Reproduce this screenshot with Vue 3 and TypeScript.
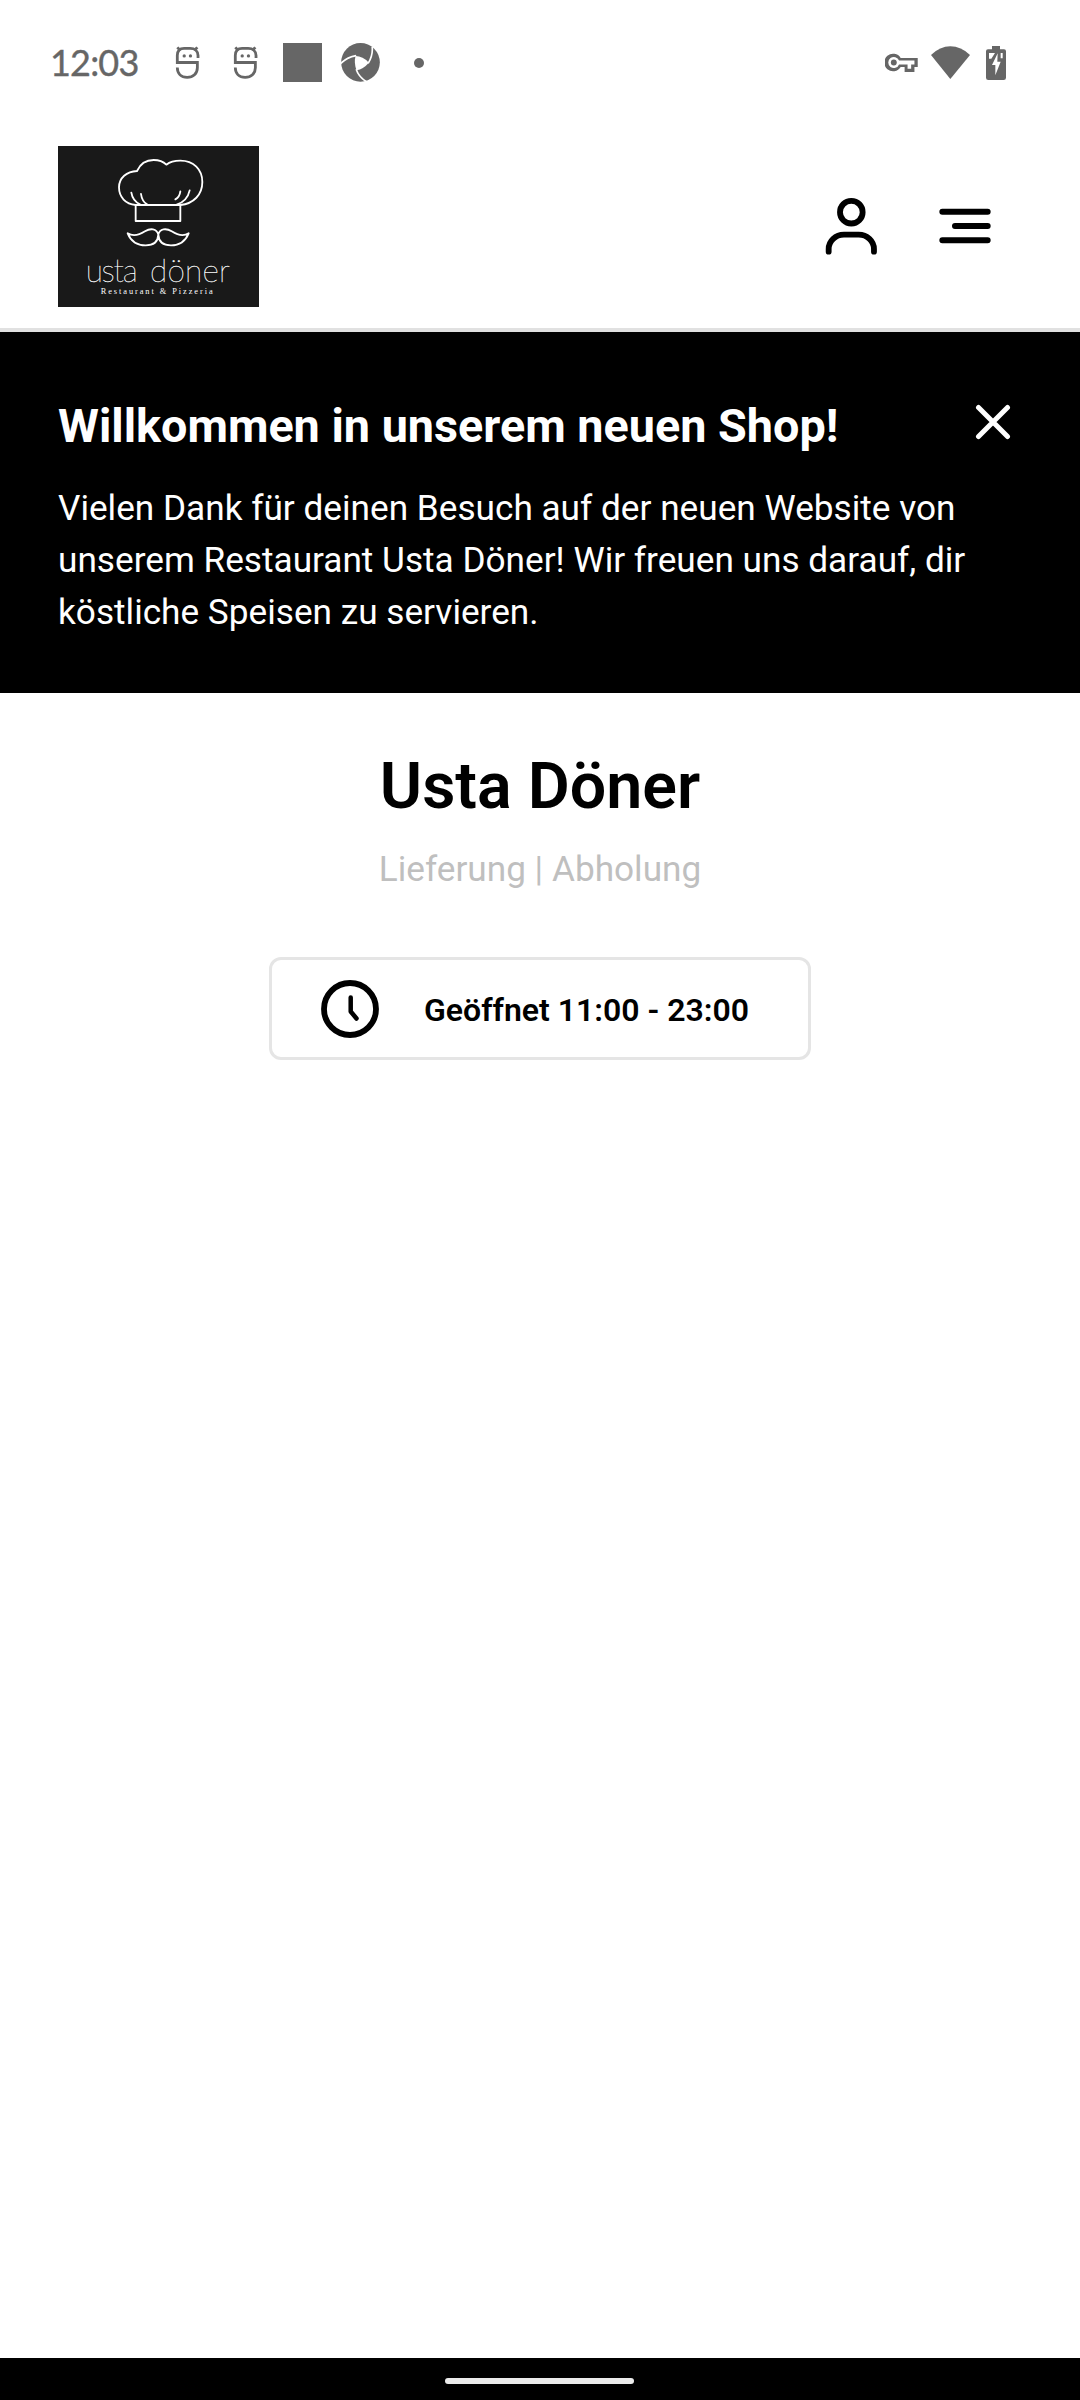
<script setup lang="ts">
import { ref } from 'vue'

const bannerOpen = ref(true)
const shop = {
  name: 'Usta Döner',
  services: 'Lieferung | Abholung',
  hours: 'Geöffnet 11:00 - 23:00',
}
const mascots = [1, 2]
</script>

<template>
  <div class="screen">
    <div class="status">
      <span class="time">12:03</span>
      <svg v-for="m in mascots" :key="m" class="mascot" viewBox="434 76 76 106">
        <g fill="none" stroke="#666" stroke-width="8.500">
          <path d="M504 115V108C504 94 494 86 480 86H462C448 86 441 94 441 108V129H502V145C502 163 489 174 471 174C453 174 441 163 441 144" />
          <path d="M441 83L450 92M502 83L493 92" />
        </g>
        <circle cx="462" cy="109" r="5" fill="#666" /><circle cx="481" cy="109" r="5" fill="#666" />
      </svg>
      <span class="square"></span>
      <svg class="swirl" viewBox="305 69 116 117">
        <circle cx="363" cy="127" r="58" fill="#666" />
        <path d="M348 108Q370 108 388 128Q372 147 351 151Q343 129 348 108Z" fill="#fff" />
        <path d="M303 131Q322 112 350 107M398 80Q401 106 386 130M421 172Q408 184 396 178M350 148Q358 172 382 186" fill="none" stroke="#fff" stroke-width="5" />
      </svg>
      <span class="dot"></span>
      <div class="system">
        <svg class="key" viewBox="75 99 99 58">
          <path d="M122 114A27 27 0 1 0 122 142H134V157H164V142H174V114Z" fill="#666" />
          <path d="M117 122A17 17 0 1 0 117 134H143V147H154V134H164V122Z" fill="#fff" />
          <circle cx="101" cy="128" r="9" fill="#666" />
        </svg>
        <svg class="wifi" viewBox="213 74 117 99"><path d="M213 101Q240 75 271 75Q303 75 330 101L271 173Z" fill="#666" /></svg>
        <svg class="battery" viewBox="378 75 60 102">
          <path d="M396 75H420V85H432Q438 85 438 91V170Q438 177 431 177H385Q378 177 378 170V91Q378 85 384 85H396Z" fill="#666" />
          <path d="M387 96H405L394 113H387ZM422 96H428V112H422ZM413 97L396 132H406V163L422 122H412Z" fill="#fff" />
        </svg>
      </div>
    </div>

    <header class="header">
      <svg class="logo" viewBox="54 48 603 483">
        <rect x="54" y="48" width="603" height="483" fill="#191919" />
        <g fill="none" stroke="#fff" stroke-width="5.500" stroke-linecap="round" stroke-linejoin="round">
          <path d="M287 225H421V273H287Z" />
          <path d="M287 225C257 222 237 202 237 172C237 144 260 124 291 123C302 99 319 90 341 90C357 90 370 95 379 104C389 96 404 92 421 92C461 92 487 119 487 156C487 194 461 221 421 225" />
          <path d="M274 188Q278 213 301 224M303 192Q306 215 322 224M421 184Q419 201 406 208M449 181Q442 213 410 224" />
          <path d="M355 314C350 295 331 294 315 304C298 315 281 321 263 310C274 337 294 346 317 346C340 346 354 335 355 314C359 295 379 294 395 304C412 315 429 321 446 310C435 337 415 346 393 346C370 346 356 335 355 314Z" />
        </g>
        <text class="wordmark" x="137" y="455" textLength="156">usta</text>
        <text class="wordmark" x="330" y="455" textLength="240">döner</text>
        <text class="tagline" x="182" y="492" textLength="336">Restaurant &amp; Pizzeria</text>
      </svg>
      <nav class="actions">
        <svg class="person" viewBox="134 80 160 176" fill="none" stroke="#000" stroke-width="17.500" stroke-linecap="round">
          <circle cx="213" cy="125.500" r="34" />
          <path d="M145 244V236A46 43 0 0 1 191 193H235A46 43 0 0 1 281 236V244" />
        </svg>
        <svg class="menu" viewBox="477 114 156 108" fill="none" stroke="#000" stroke-width="18" stroke-linecap="round">
          <path d="M487 125.500H623M525 168H623M487 210.500H623" />
        </svg>
      </nav>
    </header>

    <section v-if="bannerOpen" class="banner">
      <div class="banner-text">
        <h2>Willkommen in unserem neuen Shop!</h2>
        <p>Vielen Dank für deinen Besuch auf der neuen Website von<br />unserem Restaurant Usta Döner! Wir freuen uns darauf, dir<br />köstliche Speisen zu servieren.</p>
      </div>
      <svg class="close" viewBox="0 0 36 36" @click="bannerOpen = false">
        <path d="M3.500 3.500L32.500 32.500M32.500 3.500L3.500 32.500" fill="none" stroke="#fff" stroke-width="5" stroke-linecap="round" />
      </svg>
    </section>

    <main class="shop">
      <h1>{{ shop.name }}</h1>
      <p class="services">{{ shop.services }}</p>
      <div class="hours">
        <svg class="clock" viewBox="0 0 58 58" fill="none" stroke="#000" stroke-linecap="round" stroke-linejoin="round">
          <circle cx="29" cy="29" r="26" stroke-width="5.800" />
          <path d="M29.700 17.500V31.500L35.500 38.500" stroke-width="4.500" />
        </svg>
        <span class="hours-text">{{ shop.hours }}</span>
      </div>
    </main>

    <footer class="navbar"><span class="pill"></span></footer>
  </div>
</template>

<style>
body {
  background: #fff;
}
</style>

<style scoped>
.screen {
  width: 1080px;
  height: 2400px;
  display: flex;
  flex-direction: column;
  background: #fff;
  font-family: Roboto, "Liberation Sans", sans-serif;
  color: #000;
  overflow: hidden;
}
svg {
  display: block;
  flex: none;
}
.status {
  height: 125px;
  box-sizing: border-box;
  padding: 0 74px 0 50px;
  display: flex;
  align-items: center;
}
.time {
  width: 125px;
  padding-bottom: 2px;
  font: 400 36px/40px Lato, sans-serif;
  letter-spacing: -0.8px;
  color: #666;
  -webkit-text-stroke: 0.4px #666;
}
.mascot {
  width: 25px;
  height: 35px;
  margin-right: 33px;
}
.square {
  width: 39px;
  height: 39px;
  margin-left: -8px;
  background: #666;
}
.swirl {
  width: 39px;
  height: 39px;
  margin-left: 19px;
}
.dot {
  width: 10px;
  height: 10px;
  margin-left: 34px;
  border-radius: 50%;
  background: #666;
}
.system {
  margin-left: auto;
  display: flex;
  align-items: center;
}
.key {
  width: 33px;
  height: 19px;
}
.wifi {
  width: 39px;
  height: 33px;
  margin: 0 16px 0 13px;
}
.battery {
  width: 20px;
  height: 34px;
}
.header {
  height: 207px;
  box-sizing: border-box;
  padding: 21px 89px 0 58px;
  display: flex;
  justify-content: space-between;
  align-items: flex-start;
  border-bottom: 4px solid #e1e1e1;
}
.logo {
  width: 201px;
  height: 161px;
}
.wordmark {
  font: 100 95px Lato, sans-serif;
  fill: #fff;
  stroke: #fff;
  stroke-width: 0.9px;
}
.tagline {
  font: 400 25px "Liberation Serif", serif;
  fill: #fff;
}
.actions {
  height: 160px;
  display: flex;
  align-items: center;
  gap: 61px;
}
.person {
  width: 53.300px;
  height: 58.700px;
}
.menu {
  width: 52px;
  height: 36px;
}
.banner {
  height: 361px;
  box-sizing: border-box;
  padding: 66px 69px 0 58px;
  display: flex;
  justify-content: space-between;
  align-items: flex-start;
  background: #000;
  color: #fff;
}
h1,
h2,
p {
  margin: 0;
}
h2 {
  font-size: 46.750px;
  line-height: 56px;
  font-weight: 700;
  white-space: nowrap;
}
.banner p {
  margin-top: 28px;
  font-size: 35.200px;
  line-height: 52px;
  white-space: nowrap;
}
.close {
  width: 36px;
  height: 36px;
  margin-top: 6px;
}
.shop {
  flex: 1;
  display: flex;
  flex-direction: column;
  align-items: center;
}
h1 {
  margin-top: 55px;
  font-size: 64.500px;
  line-height: 76px;
  font-weight: 600;
}
.services {
  margin-top: 19px;
  font-size: 35.200px;
  line-height: 52px;
  color: #bfbfbf;
}
.hours {
  width: 542px;
  height: 103px;
  margin-top: 62px;
  box-sizing: border-box;
  border: 3px solid #e5e5e5;
  border-radius: 12px;
  padding-left: 48.500px;
  display: flex;
  align-items: center;
  gap: 45.500px;
  font-size: 32px;
  font-weight: 600;
  white-space: nowrap;
}
.hours-text {
  padding-top: 3px;
}
.clock {
  width: 58px;
  height: 58px;
}
.navbar {
  height: 42px;
  box-sizing: border-box;
  padding: 20px 1px 0 0;
  background: #000;
  display: flex;
  justify-content: center;
  align-items: flex-start;
}
.pill {
  width: 189px;
  height: 6px;
  border-radius: 3px;
  background: #ebebeb;
}
</style>
